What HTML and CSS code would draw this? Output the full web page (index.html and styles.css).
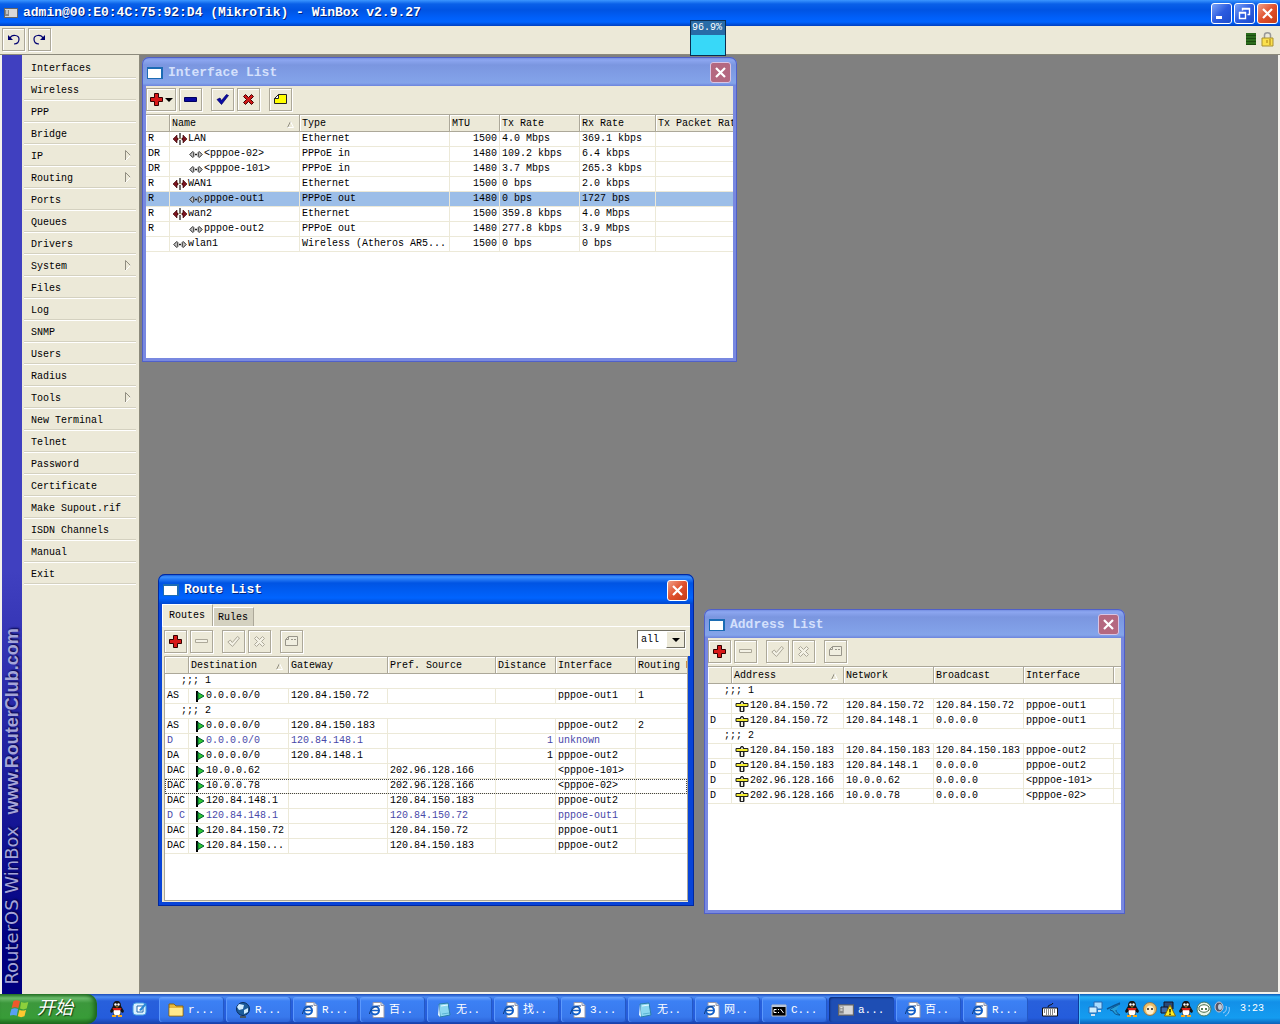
FILE: index.html
```html
<!DOCTYPE html>
<html lang="en">
<head>
<meta charset="utf-8">
<title>admin@00:E0:4C:75:92:D4 (MikroTik) - WinBox v2.9.27</title>
<link rel="stylesheet" href="styles.css">
</head>
<body>
<svg class="sprite" aria-hidden="true">
  <symbol id="add" viewBox="0 0 13 13"><path d="M4.500 .5h4v4h4v4h-4v4h-4v-4h-4v-4h4z" fill="#d81818" stroke="#300"/></symbol>
  <symbol id="remove" viewBox="0 0 13 13"><path d="M.5 4.500h12v4h-12z" fill="#0808a0" stroke="#000060"/></symbol>
  <symbol id="remove-off" viewBox="0 0 13 13"><path d="M.5 4.500h12v3h-12z" fill="#f4f2e6" stroke="#aca899"/></symbol>
  <symbol id="check" viewBox="0 0 13 13"><path d="M1 6.500l3-1.500 1.500 2.500L10.500 1.500l2 1L5.500 11.500z" fill="#0a0aa8" stroke="#000060" stroke-width=".7"/></symbol>
  <symbol id="check-off" viewBox="0 0 13 13"><path d="M.8 7l2.500-2 2 2.500L10.500 1.500l2 1.500L5.500 11.500z" fill="#f4f2e6" stroke="#aca899"/></symbol>
  <symbol id="cross" viewBox="0 0 13 13"><path d="M1.500 3.500l2-2 3 3 3-3 2 2-3 3 3 3-2 2-3-3-3 3-2-2 3-3z" fill="#d01818" stroke="#400"/></symbol>
  <symbol id="cross-off" viewBox="0 0 13 13"><path d="M1.500 3.500l2-2 3 3 3-3 2 2-3 3 3 3-2 2-3-3-3 3-2-2 3-3z" fill="#f4f2e6" stroke="#aca899"/></symbol>
  <symbol id="note" viewBox="0 0 13 13"><path d="M4.500 1.500h8v9h-12v-5z" fill="#ff0" stroke="#222"/><path d="M.5 5.500l4-4v4z" fill="#fff" stroke="#222"/></symbol>
  <symbol id="note-off" viewBox="0 0 13 13"><path d="M3.500 1.500h9v9h-12v-6z" fill="#f0eee0" stroke="#98958a"/><path d="M1 4.500h2.500v-3M6 4.500h2M9 4.500h2" fill="none" stroke="#98958a"/></symbol>
  <symbol id="close" viewBox="0 0 13 13"><path d="M2 2l9 9M11 2l-9 9" stroke="#fff" stroke-width="2.200" fill="none"/></symbol>
  <symbol id="eth" viewBox="0 0 14 12"><path d="M0 6l4-4v3h1v2H4v3zM14 6l-4-4v3H9v2h1v3z" fill="#7a1420" stroke="#300" stroke-width=".6"/><path d="M7 0v5M7 7v5" stroke="#111" stroke-width="1.200"/><path d="M5.500 5.500h3" stroke="#999060"/></symbol>
  <symbol id="link" viewBox="0 0 14 12"><path d="M.8 6.500l3-3 1 1v4l-1 1zM13.200 6.500l-3-3-1 1v4l1 1z" fill="#c0c0c0" stroke="#222"/><path d="M6 6.500h2" stroke="#222" stroke-width="1.400"/></symbol>
  <symbol id="flag" viewBox="0 0 9 12"><path d="M1 1v11" stroke="#000" stroke-width="2"/><path d="M2 2.500l6 3.500-6 3.500z" fill="#30c830" stroke="#063"/></symbol>
  <symbol id="addr" viewBox="0 0 13 12"><path d="M4.500 3.500l1-2h2l1 2h4v3h-4v5h-4v-5h-4v-3z" fill="#222" stroke="#222"/><path d="M1 4h11v2H1z" fill="#f4ec30"/><path d="M5.500 2.500h2V4h-2z" fill="#ddd"/><path d="M5.500 7h2v4h-2z" fill="#f0f0e0"/></symbol>
  <symbol id="sort" viewBox="0 0 7 7"><path d="M3.500 .5l-3 6" stroke="#908d80"/><path d="M3.500 .5l3 6H.5" stroke="#fff" fill="none"/></symbol>
  <symbol id="sub" viewBox="0 0 7 11"><path d="M.5 10V.5l5 5" stroke="#908d80" fill="none"/><path d="M5.500 5.500l-5 5" stroke="#fff"/></symbol>
  <symbol id="win" viewBox="0 0 16 12"><path d="M0 0h16v12H0z" fill="#1c6cb4"/><path d="M1 2h13v9H1z" fill="#fff"/></symbol>
  <symbol id="app" viewBox="0 0 14 10"><path d="M0 0h14v10H0z" fill="#666"/><path d="M1 1h12v8H1z" fill="#d8d8d8"/><path d="M1 2h4v6H1z" fill="#888"/><path d="M2 3h2M2 5h2" stroke="#fff"/></symbol>
  <symbol id="ie" viewBox="0 0 16 16"><path d="M4 .5h8l3 3v12H4z" fill="#fff" stroke="#99a"/><path d="M12 .5v3h3" fill="#cde" stroke="#99a"/><circle cx="6" cy="8.500" r="4" fill="#fff" stroke="#1460c8" stroke-width="2"/><path d="M3 8.500h7" stroke="#1460c8" stroke-width="1.500"/><path d="M.5 12C0 9 6 3 11 4" stroke="#123c80" fill="none"/></symbol>
  <symbol id="folder" viewBox="0 0 16 16"><path d="M1 2h5l2 2h7v10H1z" fill="#e8b83c" stroke="#8a6410"/><path d="M1.500 6h13v7.500h-13z" fill="#ffe98c"/></symbol>
  <symbol id="globe" viewBox="0 0 16 16"><circle cx="8" cy="7" r="6.500" fill="#1c5c9c" stroke="#0a2c5c"/><path d="M4 2l5 1-1 4-4 1-2-3zM9 8l4-2v4l-4 2z" fill="#d0ecff"/><path d="M5 14h6v2H5z" fill="#456"/></symbol>
  <symbol id="pad" viewBox="0 0 16 16"><path d="M3 2l9-1 2 12-10 2z" fill="#8cd8f0" stroke="#2a7ca8"/><path d="M3 2l1 13-2-2z" fill="#e8faff"/><path d="M5 4l7-1" stroke="#e8faff"/><path d="M6 12l7-1" stroke="#5cb4d4"/></symbol>
  <symbol id="cmd" viewBox="0 0 16 16"><path d="M1 3h14v11H1z" fill="#000" stroke="#bbb"/><path d="M1 3h14v2H1z" fill="#b8c4d8"/><path d="M5.500 7.500H3v3h2.500M7.500 7v1M7.500 10v1M9.500 7l3 4" stroke="#fff" fill="none"/></symbol>
  <symbol id="qq" viewBox="0 0 16 16"><path d="M8 0c3 0 4 2 4 5l3 5-1 2-2-1-1 4H5l-1-4-2 1-1-2 3-5c0-3 1-5 4-5z" fill="#151515"/><ellipse cx="8" cy="11" rx="3.500" ry="3.500" fill="#fff"/><circle cx="6.500" cy="3.500" r="1.200" fill="#fff"/><circle cx="9.500" cy="3.500" r="1.200" fill="#fff"/><path d="M6 5.500h4l-2 1z" fill="#fb3"/><path d="M3.500 7h9l-1 2.200h-7z" fill="#d82018"/><path d="M3 14h4v2H3zM9 14h4v2H9z" fill="#f8a818"/></symbol>
  <symbol id="desk" viewBox="0 0 16 16"><rect x="1" y="2" width="13" height="12" rx="3" fill="#d8f0ff" stroke="#48a0e0"/><path d="M5 5h6v6H5z" fill="#fff" stroke="#2068b0"/><path d="M7 9l6-7 2 1-6 7z" fill="#2a88d8"/></symbol>
  <symbol id="keys" viewBox="0 0 16 14"><path d="M6 4c0-3 4-1 5-4" stroke="#111" fill="none"/><path d="M.5 5h15v8H.5z" fill="#fff" stroke="#111"/><path d="M2 7h12M2 9h12M4 11h8" stroke="#111" stroke-dasharray="1 1"/></symbol>
  <symbol id="net" viewBox="0 0 16 16"><path d="M6 1h8v7H6z" fill="#a8dcff" stroke="#2868b0"/><path d="M1 6h8v6H1z" fill="#d0f0ff" stroke="#2868b0"/><path d="M3 14h4M10 10h3" stroke="#d0e0f0" stroke-width="2"/></symbol>
  <symbol id="bird" viewBox="0 0 16 16"><path d="M14 2C9 4 5 6 1 8" stroke="#0c5490" stroke-width="1.500" fill="none"/><path d="M14 3C8 6 4 8 4 9l3 1c1 3 4 4 7 4-3-2-4-3-4-5" fill="#28a0d8" stroke="#0c5490"/></symbol>
  <symbol id="face" viewBox="0 0 16 16"><circle cx="8" cy="8" r="6.500" fill="#f0c068" stroke="#875"/><ellipse cx="8" cy="9" rx="4" ry="4.500" fill="#fff0d0"/><circle cx="6" cy="8" r="1" fill="#222"/><circle cx="10" cy="8" r="1" fill="#222"/></symbol>
  <symbol id="warn" viewBox="0 0 16 16"><path d="M4 1h9v7H4z" fill="#284878" stroke="#112"/><path d="M1 6h7v6H1z" fill="#3868a8" stroke="#112"/><path d="M10 4l5.500 11h-11z" fill="#fe2" stroke="#860"/><path d="M10 8v3.500M10 12.500v1.500" stroke="#000" stroke-width="1.300"/></symbol>
  <symbol id="robot" viewBox="0 0 16 16"><circle cx="8" cy="8" r="7" fill="#e8f4e8" stroke="#476"/><path d="M3 6c3-3 7-3 10 0v3c-3 3-7 3-10 0z" fill="#fff" stroke="#464"/><circle cx="6" cy="8" r="1" fill="#252"/><circle cx="10" cy="8" r="1" fill="#252"/></symbol>
  <symbol id="vol" viewBox="0 0 16 16"><ellipse cx="5" cy="6" rx="4" ry="5" fill="#556" stroke="#ccd"/><ellipse cx="6" cy="6" rx="2" ry="3" fill="#bcd"/><path d="M9 12c3-1 4-4 3-7M11 15c4-2 5-6 4-9" stroke="#a8d0f8" fill="none"/></symbol>
</svg>

<header class="titlebar">
  <svg class="i-app"><use href="#app"/></svg>
  <h1>admin@00:E0:4C:75:92:D4 (MikroTik) - WinBox v2.9.27</h1>
  <button class="ctl" aria-label="Minimize"><svg viewBox="0 0 13 13"><path d="M1 9h6v3H1z" fill="#fff"/></svg></button>
  <button class="ctl" aria-label="Restore"><svg viewBox="0 0 13 13"><path d="M4.500 3.500v-2h7v6h-2M1.500 5.500h6v6h-6zM1.500 6h6M4.500 2h7" fill="none" stroke="#fff" stroke-width="1.400"/></svg></button>
  <button class="ctl shut" aria-label="Close"><svg><use href="#close"/></svg></button>
</header>

<div class="mainbar">
  <button class="tool" aria-label="Undo"><svg viewBox="0 0 13 13"><path d="M3 5c2-4 9-3 9 1 0 3-2 5-5 5" fill="none" stroke="#000070" stroke-width="1.200"/><path d="M1 2v5h5z" fill="#000070"/></svg></button>
  <button class="tool" aria-label="Redo"><svg viewBox="0 0 13 13"><path d="M10 5C8 1 1 2 1 6c0 3 2 5 5 5" fill="none" stroke="#000070" stroke-width="1.200"/><path d="M12 2v5H7z" fill="#000070"/></svg></button>
  <span class="cpu"></span>
  <svg class="lock" viewBox="0 0 13 15"><path d="M3.500 6V3c0-3 6-3 6 0v3" fill="none" stroke="#999" stroke-width="1.500"/><path d="M1 6h11v8H1z" fill="#fbe04c" stroke="#a89030"/><path d="M6 8v3M9 7v6" stroke="#a87c10"/></svg>
</div>

<main>
  <aside class="brand"><div class="brand-text"><span class="brand-name">RouterOS WinBox</span><span class="brand-site">www.RouterClub.com</span></div></aside>
  <nav class="menu">
    <button>Interfaces</button>
    <button>Wireless</button>
    <button>PPP</button>
    <button>Bridge</button>
    <button>IP<svg><use href="#sub"/></svg></button>
    <button>Routing<svg><use href="#sub"/></svg></button>
    <button>Ports</button>
    <button>Queues</button>
    <button>Drivers</button>
    <button>System<svg><use href="#sub"/></svg></button>
    <button>Files</button>
    <button>Log</button>
    <button>SNMP</button>
    <button>Users</button>
    <button>Radius</button>
    <button>Tools<svg><use href="#sub"/></svg></button>
    <button>New Terminal</button>
    <button>Telnet</button>
    <button>Password</button>
    <button>Certificate</button>
    <button>Make Supout.rif</button>
    <button>ISDN Channels</button>
    <button>Manual</button>
    <button>Exit</button>
  </nav>

  <div class="desktop">
    <section class="window win-interfaces">
      <header><svg class="i-win"><use href="#win"/></svg><h2>Interface List</h2><button class="ctl shut" aria-label="Close"><svg><use href="#close"/></svg></button></header>
      <div class="tools">
        <button class="tool wide" aria-label="Add"><svg><use href="#add"/></svg><i class="caret"></i></button>
        <button class="tool" aria-label="Remove"><svg><use href="#remove"/></svg></button>
        <button class="tool group" aria-label="Enable"><svg><use href="#check"/></svg></button>
        <button class="tool" aria-label="Disable"><svg><use href="#cross"/></svg></button>
        <button class="tool group" aria-label="Comment"><svg><use href="#note"/></svg></button>
      </div>
      <div class="list">
        <table>
          <colgroup><col class="w24"><col class="w130"><col class="w150"><col class="w50"><col class="w80"><col class="w76"><col></colgroup>
          <thead><tr><th></th><th>Name<svg class="sort"><use href="#sort"/></svg></th><th>Type</th><th>MTU</th><th>Tx Rate</th><th>Rx Rate</th><th>Tx Packet Rate</th></tr></thead>
          <tbody>
            <tr><td>R</td><td class="ic"><svg><use href="#eth"/></svg>LAN</td><td>Ethernet</td><td class="num">1500</td><td>4.0 Mbps</td><td>369.1 kbps</td><td></td></tr>
            <tr><td>DR</td><td class="ic child"><svg><use href="#link"/></svg>&lt;pppoe-02&gt;</td><td>PPPoE in</td><td class="num">1480</td><td>109.2 kbps</td><td>6.4 kbps</td><td></td></tr>
            <tr><td>DR</td><td class="ic child"><svg><use href="#link"/></svg>&lt;pppoe-101&gt;</td><td>PPPoE in</td><td class="num">1480</td><td>3.7 Mbps</td><td>265.3 kbps</td><td></td></tr>
            <tr><td>R</td><td class="ic"><svg><use href="#eth"/></svg>WAN1</td><td>Ethernet</td><td class="num">1500</td><td>0 bps</td><td>2.0 kbps</td><td></td></tr>
            <tr class="selected"><td>R</td><td class="ic child"><svg><use href="#link"/></svg>pppoe-out1</td><td>PPPoE out</td><td class="num">1480</td><td>0 bps</td><td>1727 bps</td><td></td></tr>
            <tr><td>R</td><td class="ic"><svg><use href="#eth"/></svg>wan2</td><td>Ethernet</td><td class="num">1500</td><td>359.8 kbps</td><td>4.0 Mbps</td><td></td></tr>
            <tr><td>R</td><td class="ic child"><svg><use href="#link"/></svg>pppoe-out2</td><td>PPPoE out</td><td class="num">1480</td><td>277.8 kbps</td><td>3.9 Mbps</td><td></td></tr>
            <tr><td></td><td class="ic"><svg><use href="#link"/></svg>wlan1</td><td>Wireless (Atheros AR5...</td><td class="num">1500</td><td>0 bps</td><td>0 bps</td><td></td></tr>
          </tbody>
        </table>
      </div>
    </section>

    <section class="window active win-routes">
      <header><svg class="i-win"><use href="#win"/></svg><h2>Route List</h2><button class="ctl shut" aria-label="Close"><svg><use href="#close"/></svg></button></header>
      <div class="tabs"><button class="tab on">Routes</button><button class="tab">Rules</button></div>
      <div class="tools">
        <button class="tool" aria-label="Add"><svg><use href="#add"/></svg></button>
        <button class="tool" aria-label="Remove" disabled><svg><use href="#remove-off"/></svg></button>
        <button class="tool group" aria-label="Enable" disabled><svg><use href="#check-off"/></svg></button>
        <button class="tool" aria-label="Disable" disabled><svg><use href="#cross-off"/></svg></button>
        <button class="tool group" aria-label="Comment" disabled><svg><use href="#note-off"/></svg></button>
        <span class="pick"><select aria-label="Routing table"><option>all</option></select></span>
      </div>
      <div class="list">
        <table>
          <colgroup><col class="w24"><col class="w100"><col class="w99"><col class="w108"><col class="w60"><col class="w80"><col></colgroup>
          <thead><tr><th></th><th>Destination<svg class="sort"><use href="#sort"/></svg></th><th>Gateway</th><th>Pref. Source</th><th>Distance</th><th>Interface</th><th>Routing Mark</th></tr></thead>
          <tbody>
            <tr><td colspan="7" class="note">;;; 1</td></tr>
            <tr><td>AS</td><td class="ic route"><svg><use href="#flag"/></svg>0.0.0.0/0</td><td>120.84.150.72</td><td></td><td></td><td>pppoe-out1</td><td>1</td></tr>
            <tr><td colspan="7" class="note">;;; 2</td></tr>
            <tr><td>AS</td><td class="ic route"><svg><use href="#flag"/></svg>0.0.0.0/0</td><td>120.84.150.183</td><td></td><td></td><td>pppoe-out2</td><td>2</td></tr>
            <tr class="idle"><td>D</td><td class="ic route"><svg><use href="#flag"/></svg>0.0.0.0/0</td><td>120.84.148.1</td><td></td><td class="num">1</td><td>unknown</td><td></td></tr>
            <tr><td>DA</td><td class="ic route"><svg><use href="#flag"/></svg>0.0.0.0/0</td><td>120.84.148.1</td><td></td><td class="num">1</td><td>pppoe-out2</td><td></td></tr>
            <tr><td>DAC</td><td class="ic route"><svg><use href="#flag"/></svg>10.0.0.62</td><td></td><td>202.96.128.166</td><td></td><td>&lt;pppoe-101&gt;</td><td></td></tr>
            <tr class="focused"><td>DAC</td><td class="ic route"><svg><use href="#flag"/></svg>10.0.0.78</td><td></td><td>202.96.128.166</td><td></td><td>&lt;pppoe-02&gt;</td><td></td></tr>
            <tr><td>DAC</td><td class="ic route"><svg><use href="#flag"/></svg>120.84.148.1</td><td></td><td>120.84.150.183</td><td></td><td>pppoe-out2</td><td></td></tr>
            <tr class="idle"><td>D C</td><td class="ic route"><svg><use href="#flag"/></svg>120.84.148.1</td><td></td><td>120.84.150.72</td><td></td><td>pppoe-out1</td><td></td></tr>
            <tr><td>DAC</td><td class="ic route"><svg><use href="#flag"/></svg>120.84.150.72</td><td></td><td>120.84.150.72</td><td></td><td>pppoe-out1</td><td></td></tr>
            <tr><td>DAC</td><td class="ic route"><svg><use href="#flag"/></svg>120.84.150...</td><td></td><td>120.84.150.183</td><td></td><td>pppoe-out2</td><td></td></tr>
          </tbody>
        </table>
      </div>
    </section>

    <section class="window win-addresses">
      <header><svg class="i-win"><use href="#win"/></svg><h2>Address List</h2><button class="ctl shut" aria-label="Close"><svg><use href="#close"/></svg></button></header>
      <div class="tools">
        <button class="tool" aria-label="Add"><svg><use href="#add"/></svg></button>
        <button class="tool" aria-label="Remove" disabled><svg><use href="#remove-off"/></svg></button>
        <button class="tool group" aria-label="Enable" disabled><svg><use href="#check-off"/></svg></button>
        <button class="tool" aria-label="Disable" disabled><svg><use href="#cross-off"/></svg></button>
        <button class="tool group" aria-label="Comment" disabled><svg><use href="#note-off"/></svg></button>
      </div>
      <div class="list">
        <table>
          <colgroup><col class="w24"><col class="w112"><col class="w90"><col class="w90"><col class="w90"><col></colgroup>
          <thead><tr><th></th><th>Address<svg class="sort"><use href="#sort"/></svg></th><th>Network</th><th>Broadcast</th><th>Interface</th><th></th></tr></thead>
          <tbody>
            <tr><td colspan="6" class="note">;;; 1</td></tr>
            <tr><td></td><td class="ic"><svg><use href="#addr"/></svg>120.84.150.72</td><td>120.84.150.72</td><td>120.84.150.72</td><td>pppoe-out1</td><td></td></tr>
            <tr><td>D</td><td class="ic"><svg><use href="#addr"/></svg>120.84.150.72</td><td>120.84.148.1</td><td>0.0.0.0</td><td>pppoe-out1</td><td></td></tr>
            <tr><td colspan="6" class="note">;;; 2</td></tr>
            <tr><td></td><td class="ic"><svg><use href="#addr"/></svg>120.84.150.183</td><td>120.84.150.183</td><td>120.84.150.183</td><td>pppoe-out2</td><td></td></tr>
            <tr><td>D</td><td class="ic"><svg><use href="#addr"/></svg>120.84.150.183</td><td>120.84.148.1</td><td>0.0.0.0</td><td>pppoe-out2</td><td></td></tr>
            <tr><td>D</td><td class="ic"><svg><use href="#addr"/></svg>202.96.128.166</td><td>10.0.0.62</td><td>0.0.0.0</td><td>&lt;pppoe-101&gt;</td><td></td></tr>
            <tr><td>D</td><td class="ic"><svg><use href="#addr"/></svg>202.96.128.166</td><td>10.0.0.78</td><td>0.0.0.0</td><td>&lt;pppoe-02&gt;</td><td></td></tr>
          </tbody>
        </table>
      </div>
    </section>
  </div>
</main>

<footer class="taskbar">
  <button class="start" lang="zh"><svg viewBox="0 0 18 18"><path d="M3 3c2-1.500 4-1 6 0L7.500 9C5.500 8 3.500 8 1.500 9z" fill="#f0582c"/><path d="M10 3.500c2 1 4 1 6.500 0L15 9.500c-2 1-4 1-6 0z" fill="#8cd03c"/><path d="M1.300 10c2-1 4-1 6 0L6 16c-2-1-4-1-6.500 0z" fill="#58a0f4"/><path d="M8.500 10.500c2 1 4 1 6 0L13 16.500c-2 1-4 1-6 0z" fill="#fcc830"/></svg><span>开始</span></button>
  <div class="quick"><svg><use href="#qq"/></svg><svg><use href="#desk"/></svg></div>
  <div class="tasks" lang="zh">
    <button><svg><use href="#folder"/></svg>r...</button>
    <button><svg><use href="#globe"/></svg>R...</button>
    <button><svg><use href="#ie"/></svg>R...</button>
    <button><svg><use href="#ie"/></svg>百..</button>
    <button><svg><use href="#pad"/></svg>无..</button>
    <button><svg><use href="#ie"/></svg>找..</button>
    <button><svg><use href="#ie"/></svg>3...</button>
    <button><svg><use href="#pad"/></svg>无..</button>
    <button><svg><use href="#ie"/></svg>网..</button>
    <button><svg><use href="#cmd"/></svg>C...</button>
    <button class="on"><svg><use href="#app"/></svg>a...</button>
    <button><svg><use href="#ie"/></svg>百..</button>
    <button><svg><use href="#ie"/></svg>R...</button>
  </div>
  <svg class="keys"><use href="#keys"/></svg>
  <div class="tray">
    <svg><use href="#net"/></svg><svg><use href="#bird"/></svg><svg><use href="#qq"/></svg><svg><use href="#face"/></svg><svg><use href="#warn"/></svg><svg><use href="#qq"/></svg><svg><use href="#robot"/></svg><svg><use href="#vol"/></svg>
    <time>3:23</time>
  </div>
</footer>

<div class="meter"><span>96.9%</span></div>
</body>
</html>
```
FILE: styles.css
```css
* { box-sizing: border-box; }
body {
  margin: 0;
  height: 100vh;
  display: flex;
  flex-direction: column;
  overflow: hidden;
  background: #ece9d8;
  color: #000;
  font: 10px/14px "Liberation Mono", "Noto Sans CJK SC", monospace;
}
button, select { font: inherit; color: inherit; padding: 0; border: 0; background: none; }
svg { display: block; flex: none; }
h1, h2 { margin: 0; flex: 1; font-size: 13px; line-height: 16px; font-weight: bold; white-space: nowrap; }
.sprite { position: absolute; width: 0; height: 0; }

/* Application title and main toolbar */
.titlebar {
  flex: none;
  height: 26px;
  display: flex;
  align-items: center;
  gap: 2px;
  padding: 0 2px 0 4px;
  color: #fff;
  text-shadow: 1px 1px 0 #00247c;
  background: linear-gradient(#3c96ff, #0a60e8 4px, #0054e3 10px, #0060fa 18px, #0064ff 22px, #0040c0);
}
.i-app { width: 14px; height: 10px; margin-right: 3px; }
.ctl {
  flex: none;
  width: 21px;
  height: 21px;
  display: grid;
  place-items: center;
  border: 1px solid #fff;
  border-radius: 3px;
  background: linear-gradient(135deg, #7ca4f8, #2c5ce0 50%, #1c4ccc);
}
.ctl svg { width: 13px; height: 13px; }
.shut { background: linear-gradient(135deg, #f0a088, #e0502c 50%, #c43c18); }
.mainbar {
  flex: none;
  height: 29px;
  display: flex;
  align-items: center;
  gap: 3px;
  padding: 0 6px 2px 2px;
  border-bottom: 1px solid #8c8a7c;
}
.cpu { width: 10px; height: 12px; margin-left: auto; background: repeating-linear-gradient(#2c6c1c 0 2px, #1c4c10 2px 3px); }
.lock { width: 13px; height: 15px; margin-left: 2px; }
.tool {
  width: 23px;
  height: 23px;
  display: flex;
  align-items: center;
  justify-content: center;
  border: 1px solid #aca899;
  box-shadow: inset 1px 1px 0 #fff, 1px 1px 0 #fff;
}
.tool svg { width: 13px; height: 13px; }
.wide { width: 30px; gap: 2px; }
.caret { border: 4px solid transparent; border-top-color: #000; border-bottom: 0; }

/* Main area: brand strip, menu, desktop */
main { flex: 1; min-height: 0; display: flex; }
.brand {
  flex: none;
  width: 22px;
  display: flex;
  flex-direction: column;
  justify-content: flex-end;
  border-left: 2px solid #f4f2ec;
  background: linear-gradient(#4040c0 55%, #000080 95%);
}
.brand-text {
  display: flex;
  gap: 12px;
  padding-top: 9px;
  writing-mode: vertical-rl;
  transform: rotate(180deg);
  line-height: 20px;
  color: #a4a4d8;
  text-shadow: 1px 1px 2px #000040;
}
.brand-name { font-family: "DejaVu Sans", sans-serif; font-size: 18px; }
.brand-site { font-family: "Liberation Sans", sans-serif; font-size: 18px; font-weight: bold; }
.menu { flex: none; width: 118px; padding: 2px 3px 0 2px; border-right: 1px solid #8c8a7c; }
.menu button {
  width: 100%;
  height: 22px;
  display: flex;
  justify-content: space-between;
  align-items: flex-start;
  padding: 5px 4px 0 7px;
  border-bottom: 1px solid #fff;
  box-shadow: inset 0 -1px 0 #d4d1c0;
}
.menu svg { width: 7px; height: 11px; }
.desktop {
  flex: 1;
  position: relative;
  overflow: hidden;
  background: #808080;
  border-right: 2px solid #f4f2ec;
  border-bottom: 2px solid #f4f2ec;
}

/* Child windows */
.window {
  position: absolute;
  display: flex;
  flex-direction: column;
  padding: 0 4px 4px;
  border-radius: 7px 7px 0 0;
  background: linear-gradient(#6c86dc, #8ca6f0 3px, #7b96e0 8px, #84a4ea 26px, #6c84dc 29px, #7888e0 29px);
  box-shadow: inset 0 0 0 1px #5060c8;
}
.active {
  background: linear-gradient(#0848c8, #3c90ff 3px, #0054e3 9px, #0064ff 24px, #0048d0 30px, #0844d8 30px);
  box-shadow: inset 0 0 0 1px #0028a0;
}
.win-interfaces { left: 2px; top: 2px; width: 595px; height: 305px; }
.win-routes { left: 18px; top: 519px; width: 536px; height: 332px; }
.win-addresses { left: 564px; top: 554px; width: 421px; height: 305px; }
.window header { flex: none; height: 29px; display: flex; align-items: center; gap: 5px; padding: 2px 2px 0 1px; color: #d4e0fc; }
.window.active header { height: 30px; color: #fff; text-shadow: 1px 1px 0 #00247c; }
.i-win { width: 16px; height: 12px; }
.window:not(.active) .shut { border-color: #d8c4e4; background: #b46880; }
.tools { flex: none; height: 28px; display: flex; align-items: flex-start; gap: 3px; padding-top: 2px; background: #ece9d8; }
.group { margin-left: 6px; }
.win-routes .tools { height: 30px; padding: 3px 4px 0 2px; border-top: 1px solid #fff; }
.win-routes .list {
  margin: 0 2px 1px;
  border: solid #aca899;
  border-width: 0 1px 1px;
  box-shadow: -1px 0 0 1px #ece9d8;
}
.tabs { flex: none; height: 22px; display: flex; align-items: flex-end; background: #ece9d8; }
.tab { height: 19px; padding: 2px 5px 0 4px; border: solid #fff; border-width: 1px 0 0 1px; border-right: 1px solid #aca899; background: #d4d1c0; }
.tab.on { height: 22px; padding: 0 7px 0 6px; background: #ece9d8; }
.pick { position: relative; margin-left: auto; width: 49px; height: 19px; }
.pick select { appearance: none; width: 100%; height: 100%; padding-left: 3px; border: 1px solid #716f64; border-right-color: #fff; border-bottom-color: #fff; border-radius: 0; background: #fff; }
.pick::before { content: ""; position: absolute; right: 1px; top: 1px; bottom: 1px; width: 17px; background: #ece9d8; border: 1px solid #fff; border-right-color: #716f64; border-bottom-color: #716f64; pointer-events: none; }
.pick::after { content: ""; position: absolute; right: 6px; top: 8px; border: 4px solid transparent; border-top-color: #000; border-bottom: 0; pointer-events: none; }

/* Data lists */
.list { flex: 1; min-height: 0; overflow: hidden; background: #fff; }
table { width: 100%; table-layout: fixed; border-collapse: separate; border-spacing: 0; }
th, td { padding: 0 2px; text-align: left; white-space: nowrap; overflow: hidden; font-weight: normal; border-right: 1px solid #ece9d8; }
th { height: 18px; padding-top: 2px; line-height: 14px; background: #ece9d8; border: solid #aca899; border-width: 1px 1px 1px 0; box-shadow: inset 1px 1px 0 #fff; }
th:last-child { border-right: 0; padding-right: 0; }
td { height: 15px; line-height: 14px; border-bottom: 1px solid #ece9d8; }
td:last-child { border-right: 0; }
.num { text-align: right; }
.sort { float: right; width: 7px; height: 7px; margin: 4px 3px 0 0; }
.ic { padding-left: 3px; }
.ic svg { display: inline-block; width: 14px; height: 12px; margin-right: 1px; vertical-align: top; margin-top: 1px; }
.child { padding-left: 19px; }
.route { padding-left: 7px; }
.route svg { width: 9px; }
.note { padding-left: 16px; }
.selected td { background: #9cbee8; }
.idle { color: #4848a8; }
.focused { outline: 1px dotted #444; outline-offset: -1px; }
.w24 { width: 24px; }
.w50 { width: 50px; }
.w60 { width: 60px; }
.w76 { width: 76px; }
.w80 { width: 80px; }
.w90 { width: 90px; }
.w99 { width: 99px; }
.w100 { width: 100px; }
.w108 { width: 108px; }
.w112 { width: 112px; }
.w130 { width: 130px; }
.w150 { width: 150px; }

/* System taskbar */
.taskbar {
  flex: none;
  height: 30px;
  display: flex;
  align-items: stretch;
  color: #fff;
  background: linear-gradient(#1c4cb8, #4c8cf4 3px, #2860dc 7px, #245cdc 24px, #1840a8);
}
.taskbar svg { width: 16px; height: 16px; }
.start {
  width: 97px;
  display: flex;
  align-items: center;
  gap: 7px;
  padding: 0 0 2px 10px;
  border-radius: 0 10px 10px 0;
  background: linear-gradient(#2c7c2c, #6cbc6c 4px, #3c983c 9px, #389c38 24px, #206c20);
  box-shadow: inset -3px 0 4px #1c641c;
  font-size: 18px;
  line-height: 24px;
  font-style: italic;
  text-shadow: 1px 1px 1px #143c14;
}
.start span { padding-top: 2px; }
.taskbar .start svg { width: 20px; height: 20px; }
.quick { display: flex; align-items: center; gap: 7px; width: 62px; padding-left: 12px; }
.tasks { flex: 1; min-width: 0; display: flex; gap: 2px; padding: 3px 0 2px; font-size: 11px; line-height: 16px; }
.tasks button {
  flex: 0 1 65px;
  min-width: 0;
  display: flex;
  align-items: center;
  gap: 4px;
  padding-left: 9px;
  overflow: hidden;
  border-radius: 3px;
  background: linear-gradient(#6ca4fc, #3c80f4 4px, #3878ec 20px, #2c64d8);
  box-shadow: inset 1px 0 0 #5c98fc, inset -1px 0 0 #2458c4;
}
.tasks .on { background: #1e4eb4; box-shadow: inset 1px 1px 2px #0c2c78; }
.taskbar .keys { height: 14px; align-self: center; margin: 2px 20px 0 0; }
.tray {
  width: 202px;
  display: flex;
  align-items: center;
  gap: 2px;
  padding: 0 16px 0 9px;
  border-left: 1px solid #0c3c9c;
  background: linear-gradient(#0c58b8, #28b0f8 3px, #1290e8 8px, #149cf0 24px, #0c60b8);
  box-shadow: inset 1px 0 0 #48c0fc;
}
.tray time { margin-left: auto; }

/* Floating load meter, above every window */
.meter {
  position: absolute;
  left: 690px;
  top: 20px;
  width: 36px;
  height: 36px;
  border: 1px solid #0c2c50;
  background: #38d8f8;
  color: #fff;
}
.meter span { display: block; padding-left: 1px; background: #286ca8; }
```
